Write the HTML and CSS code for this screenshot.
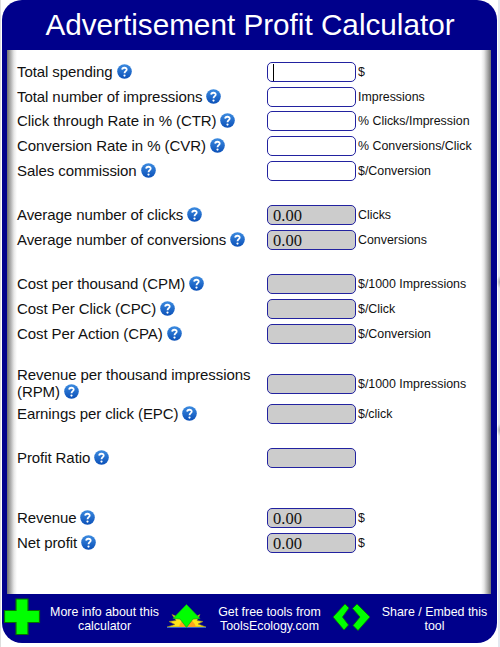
FILE: index.html
```html
<!DOCTYPE html>
<html lang="en">
<head>
<meta charset="utf-8">
<title>Advertisement Profit Calculator</title>
<link rel="stylesheet" href="styles.css">
</head>
<body>
<main class="panel">
  <h1 class="title"><span>Advertisement Profit Calculator</span></h1>
  <form class="content" id="form"></form>
  <footer class="footer">
    <svg class="plus" width="38" height="38" viewBox="0 0 38 38"><path d="M13 1h12v11.500h11.500v12h-11.500v12h-12v-12h-11.500v-12h11.500z" fill="#0f0" stroke="#087000" stroke-width="1.2"/></svg>
    <a class="more">More info about this<br>calculator</a>
    <svg class="arrow" width="40" height="26" viewBox="0 0 40 26"><path d="M0 23l8-2.500-6-3 7-1 -4-6 7 3 7-5 8 5 6-3-3 6 6 1-5 2.500 8 3z" fill="#ffe51a" stroke="#8d8a25" stroke-width=".6"/><path d="M12 23q2-8 8-8t9 8z" fill="#ffa51d"/><path d="M0 23.500h39" stroke="#3d72dc" stroke-width=".8"/><path d="M19.500 .5L33 14.500l-7 .5-6.500 8.500-6.500-8.500-7-.5z" fill="#0f0" stroke="#129e20" stroke-width=".7"/></svg>
    <a class="tools">Get free tools from<br>ToolsEcology.com</a>
    <svg class="code" width="40" height="30" viewBox="0 0 40 30"><path d="M13 1L1 14l11 13 4.500-5L10.500 14l6.500-9zM25 1l13 13-12 13.500-5-5 7-8.500-7.500-8.500z" fill="#0f0" stroke="#087000" stroke-width=".8"/></svg>
    <a class="share">Share / Embed this<br>tool</a>
  </footer>
</main>
<i class="speck speck-a"></i><i class="speck speck-b"></i>
<script src="app.js"></script>
</body>
</html>
```
FILE: styles.css
```css
* { box-sizing: border-box; }
html { overflow: hidden; }
body { margin: 0; width: 500px; height: 647px; background: #fff; border-left: 1px solid #ddd; font-family: "Liberation Sans", Arial, sans-serif; color: #111; position: relative; box-shadow: inset -2px 0 #e4e8f0; overflow: hidden; }
.panel { width: 495px; height: 643px; margin-left: 1px; background: #00008b; border-radius: 20px; padding: 0 6px 0 5px; overflow: hidden; }
.title { margin: 0; height: 50px; padding-left: 2px; line-height: 50px; font-size: 29.700px; font-weight: 400; color: #fff; text-align: center; white-space: nowrap; }
.content { height: 543.500px; padding: 10px 10px 0; background: linear-gradient(90deg, #707070 0, #a4a4a4 3px, #e8e8e8 7px, #fff 10px, #fff calc(100% - 10px), #e8e8e8 calc(100% - 7px), #a4a4a4 calc(100% - 3px), #707070 100%); }
.group { margin-bottom: 19.700px; }
.group:nth-child(2) { margin-bottom: 20.300px; }
.group:nth-child(5) { margin-bottom: 35.500px; }
.row { display: grid; grid-template-columns: 250px 89px 1fr; align-items: center; height: 24.600px; }
.row.tall { height: 36px; }
.label { font-size: 15px; line-height: 17px; white-space: nowrap; letter-spacing: -.08px; margin-top: -1px; }
.help { width: 15px; height: 15px; vertical-align: -2px; margin-left: 4px; }
.field { width: 89px; height: 20px; border: 1px solid #2222a0; border-radius: 5px; padding: 0 5px; font: 16.500px/20px "Liberation Serif", serif; color: #111; background: #fff; position: relative; }
.field.result { background: #ccc; }
.caret { display: block; width: 1px; height: 17px; margin-top: 1px; background: #000; }
.unit { font-size: 12.400px; padding-left: 2px; white-space: nowrap; }
.footer { display: flex; color: #fff; font-size: 12.400px; line-height: 14.500px; text-align: center; height: 49px; margin-left: -5px; margin-right: -6px; }
.footer a { padding-top: 11px; white-space: nowrap; flex: none; }
.footer svg { flex: none; }
.plus { margin: 4px 0 0 1px; }
.more { width: 127px; }
.arrow { margin: 10px 0 0 -1px; }
.tools { width: 125px; }
.code { margin: 9px 0 0 0; }
.share { width: 125px; }
.speck { position: absolute; right: 0; width: 3px; height: 12px; background: radial-gradient(ellipse at right, #aaa, transparent 75%); }
.speck-a { top: 276px; }
.speck-b { top: 424px; }
```
FILE: app.js
```js
const help = '<svg class="help" viewBox="0 0 15 15"><defs><linearGradient id="b" x2="0" y2="1"><stop stop-color="#3c8be0"/><stop offset="1" stop-color="#0b50b8"/></linearGradient></defs><circle cx="7.5" cy="7.5" r="7.3" fill="url(#b)"/><path d="M5.200 5.600C5.300 3 9.900 3.200 9.700 5.700 9.600 7.200 7.600 7.200 7.500 9.200" fill="none" stroke="#fff" stroke-width="1.8"/><circle cx="7.500" cy="11.600" r="1.1" fill="#fff"/></svg>';
const groups = [
  [['Total spending', '$', 'caret'], ['Total number of impressions', 'Impressions'], ['Click through Rate in % (CTR)', '% Clicks/Impression'], ['Conversion Rate in % (CVR)', '% Conversions/Click'], ['Sales commission', '$/Conversion']],
  [['Average number of clicks', 'Clicks', '0.00'], ['Average number of conversions', 'Conversions', '0.00']],
  [['Cost per thousand (CPM)', '$/1000 Impressions', ''], ['Cost Per Click (CPC)', '$/Click', ''], ['Cost Per Action (CPA)', '$/Conversion', '']],
  [['Revenue per thousand impressions<br>(RPM)', '$/1000 Impressions', ''], ['Earnings per click (EPC)', '$/click', '']],
  [['Profit Ratio', '', '']],
  [['Revenue', '$', '0.00'], ['Net profit', '$', '0.00']]
];
document.getElementById('form').innerHTML = groups.map((rows, g) => '<div class="group">' + rows.map(([label, unit, value]) =>
  `<div class="row${label.includes('<br>') ? ' tall' : ''}"><div class="label">${label}${help}</div><div class="field${g ? ' result' : ''}">${value === 'caret' ? '<i class="caret"></i>' : value || ''}</div><div class="unit">${unit}</div></div>`).join('') + '</div>').join('');
```
